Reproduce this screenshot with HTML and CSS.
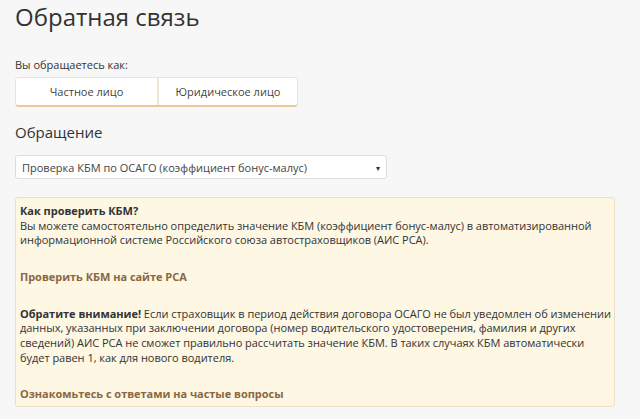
FILE: index.html
```html
<!DOCTYPE html>
<html lang="ru">
<head>
    <meta charset="UTF-8">
    <meta name="viewport" content="width=device-width, initial-scale=1.0">
    <title>Обратная связь</title>
    <link rel="stylesheet" href="styles.css">
</head>
<body>
    <div class="page">
        <h1 class="page-title">Обратная связь</h1>

        <div class="form-group">
            <label class="form-label">Вы обращаетесь как:</label>
            <div class="toggle">
                <button class="toggle-item">Частное лицо</button>
                <button class="toggle-item">Юридическое лицо</button>
            </div>
        </div>

        <h2 class="section-title">Обращение</h2>

        <div class="select-box">
            <span>Проверка КБМ по ОСАГО (коэффициент бонус-малус)</span>
            <span class="select-arrow">&#9662;</span>
        </div>

        <div class="notice">
            <p>
                <strong>Как проверить КБМ?</strong><br>
                Вы можете самостоятельно определить значение КБМ (коэффициент бонус-малус) в автоматизированной информационной системе Российского союза автостраховщиков (АИС РСА).
            </p>
            <p><a href="#" class="notice-link">Проверить КБМ на сайте РСА</a></p>
            <p>
                <strong>Обратите внимание!</strong> Если страховщик в период действия договора ОСАГО не был уведомлен об изменении данных, указанных при заключении договора (номер водительского удостоверения, фамилия и других сведений) АИС РСА не сможет правильно рассчитать значение КБМ. В таких случаях КБМ автоматически будет равен 1, как для нового водителя.
            </p>
            <p><a href="#" class="notice-link">Ознакомьтесь с ответами на частые вопросы</a></p>
        </div>
    </div>
</body>
</html>
```

FILE: styles.css
```css
body {
    margin: 0;
    font-family: "Open Sans", Arial, sans-serif;
    color: #333;
    background-color: #f7f7f7;
}
.page {
    padding: 0 25px 0 15px;
}
.page-title {
    font-size: 24px;
    font-weight: normal;
    line-height: 34px;
    margin: 0 0 23px;
}
.form-label {
    display: block;
    font-size: 11px;
    line-height: 16px;
    margin-bottom: 4px;
}
.toggle {
    display: flex;
    width: 283px;
    height: 30px;
    box-sizing: border-box;
    background-color: #fff;
    border: 1px solid #f0e2cc;
    border-bottom: 2px solid #eac89a;
    border-radius: 4px;
    overflow: hidden;
}
.toggle-item {
    flex: 1;
    background: #fff;
    border: none;
    font-family: inherit;
    font-size: 11px;
    color: #444;
    padding: 0;
}
.toggle-item + .toggle-item {
    border-left: 2px solid #f0e6d6;
    flex: 0 0 140px;
}
.section-title {
    font-size: 15px;
    font-weight: normal;
    line-height: 22px;
    margin: 14px 0 12px;
}
.select-box {
    display: flex;
    align-items: center;
    justify-content: space-between;
    width: 372px;
    height: 24px;
    box-sizing: border-box;
    padding: 0 6px;
    background-color: #fff;
    border: 1px solid #ddd;
    border-radius: 3px;
    font-size: 11px;
    color: #444;
    margin-bottom: 18px;
}
.select-arrow {
    font-size: 8px;
    color: #333;
}
.notice {
    background-color: #fdf7e4;
    border: 1px solid #efdfc2;
    border-radius: 3px;
    padding: 6px 2px 4px 4px;
    font-size: 11px;
    line-height: 14.67px;
    letter-spacing: -0.03px;
}
.notice p {
    margin: 0 0 22px;
}
.notice p:last-child {
    margin-bottom: 0;
}
.notice-link {
    color: #8a6740;
    font-weight: bold;
    text-decoration: none;
}
```
